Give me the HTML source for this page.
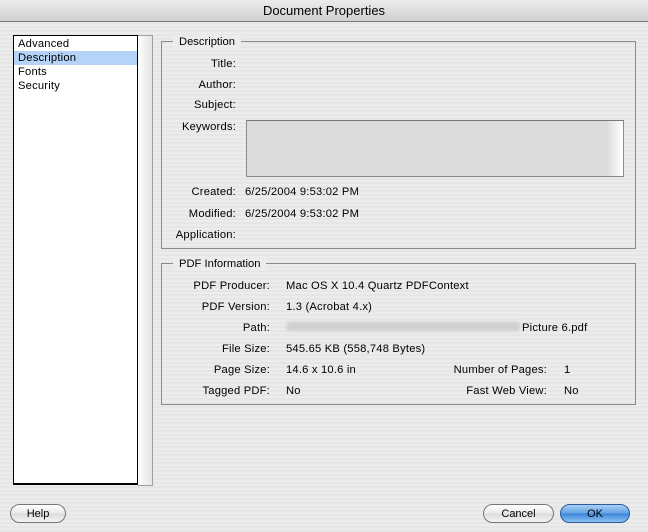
<!DOCTYPE html>
<html><head><style>
*{margin:0;padding:0;box-sizing:border-box}
body{width:648px;height:532px;overflow:hidden;position:relative;font-family:"Liberation Sans",sans-serif;font-size:11.2px;color:#000;
background:repeating-linear-gradient(#ececec 0,#ececec 2px,#e6e6e6 2px,#e6e6e6 4px);}
.title{position:absolute;left:0;top:0;width:648px;height:22px;background:linear-gradient(#ececec,#d0d0d0);border-bottom:1px solid #7a7a7a;text-align:center;font-size:13px;line-height:22px;border-radius:6px 6px 0 0}
.a{position:absolute;white-space:nowrap;line-height:14px;margin-top:1px;letter-spacing:0.2px}
.r{text-align:right}
.list{position:absolute;left:13px;top:35px;width:125px;height:450px;background:#fff;border:1px solid #000;border-bottom-width:2px}
.sb{position:absolute;left:138px;top:35px;width:15px;height:451px;background:linear-gradient(90deg,#fff,#e4e4e4);border:1px solid #a0a0a0;border-left:none}
.g{position:absolute;border:1px solid #8a8a8a}
.gl{position:absolute;background:#ececec;padding:0 6px;line-height:14px;margin-top:1px}
.btn{position:absolute;height:19px;border:1px solid #777;border-radius:10px;background:linear-gradient(#fff,#e8e8e8 50%,#dcdcdc 51%,#f4f4f4);text-align:center;line-height:19px;font-size:11px}
</style></head><body>
<div class="title">Document Properties</div>
<div class="list">
<div class="a" style="left:4px;top:0px">Advanced</div>
<div style="position:absolute;left:0;top:15px;width:123px;height:14px;background:#b5d3f7"></div>
<div class="a" style="left:4px;top:14px">Description</div>
<div class="a" style="left:4px;top:28px">Fonts</div>
<div class="a" style="left:4px;top:42px">Security</div>
</div>
<div class="sb"></div>

<div class="g" style="left:161px;top:41px;width:475px;height:208px"></div>
<div class="gl" style="left:173px;top:34px">Description</div>
<div class="a r" style="left:150px;width:86px;top:56px">Title:</div>
<div class="a r" style="left:150px;width:86px;top:77px">Author:</div>
<div class="a r" style="left:150px;width:86px;top:97px">Subject:</div>
<div class="a r" style="left:150px;width:86px;top:119px">Keywords:</div>
<div style="position:absolute;left:246px;top:120px;width:378px;height:57px;background:#dcdcdc;border:1px solid #8a8a8a;border-top-color:#777"></div>
<div style="position:absolute;left:607px;top:121px;width:16px;height:55px;background:linear-gradient(90deg,#ddd,#fff)"></div>
<div class="a r" style="left:150px;width:86px;top:184px">Created:</div>
<div class="a" style="left:245px;top:184px">6/25/2004 9:53:02 PM</div>
<div class="a r" style="left:150px;width:86px;top:206px">Modified:</div>
<div class="a" style="left:245px;top:206px">6/25/2004 9:53:02 PM</div>
<div class="a r" style="left:150px;width:86px;top:227px">Application:</div>

<div class="g" style="left:161px;top:263px;width:475px;height:142px"></div>
<div class="gl" style="left:173px;top:256px">PDF Information</div>
<div class="a r" style="left:170px;width:100px;top:278px">PDF Producer:</div>
<div class="a" style="left:286px;top:278px">Mac OS X 10.4 Quartz PDFContext</div>
<div class="a r" style="left:170px;width:100px;top:299px">PDF Version:</div>
<div class="a" style="left:286px;top:299px">1.3 (Acrobat 4.x)</div>
<div class="a r" style="left:170px;width:100px;top:320px">Path:</div>
<div style="position:absolute;left:286px;top:322px;width:234px;height:9px;background:#cfcfcf;border-radius:4px;filter:blur(1.5px)"></div>
<div class="a" style="left:522px;top:320px">Picture 6.pdf</div>
<div class="a r" style="left:170px;width:100px;top:341px">File Size:</div>
<div class="a" style="left:286px;top:341px">545.65 KB (558,748 Bytes)</div>
<div class="a r" style="left:170px;width:100px;top:362px">Page Size:</div>
<div class="a" style="left:286px;top:362px">14.6 x 10.6 in</div>
<div class="a r" style="left:420px;width:127px;top:362px">Number of Pages:</div>
<div class="a" style="left:564px;top:362px">1</div>
<div class="a r" style="left:170px;width:100px;top:383px">Tagged PDF:</div>
<div class="a" style="left:286px;top:383px">No</div>
<div class="a r" style="left:420px;width:127px;top:383px">Fast Web View:</div>
<div class="a" style="left:564px;top:383px">No</div>

<div class="btn" style="left:10px;top:504px;width:56px">Help</div>
<div class="btn" style="left:483px;top:504px;width:71px">Cancel</div>
<div class="btn" style="left:560px;top:504px;width:70px;border-color:#2a5b9e;background:linear-gradient(#a9d0f5,#5fa0e3 50%,#3b84d8 51%,#8cc4f5)">OK</div>
</body></html>
